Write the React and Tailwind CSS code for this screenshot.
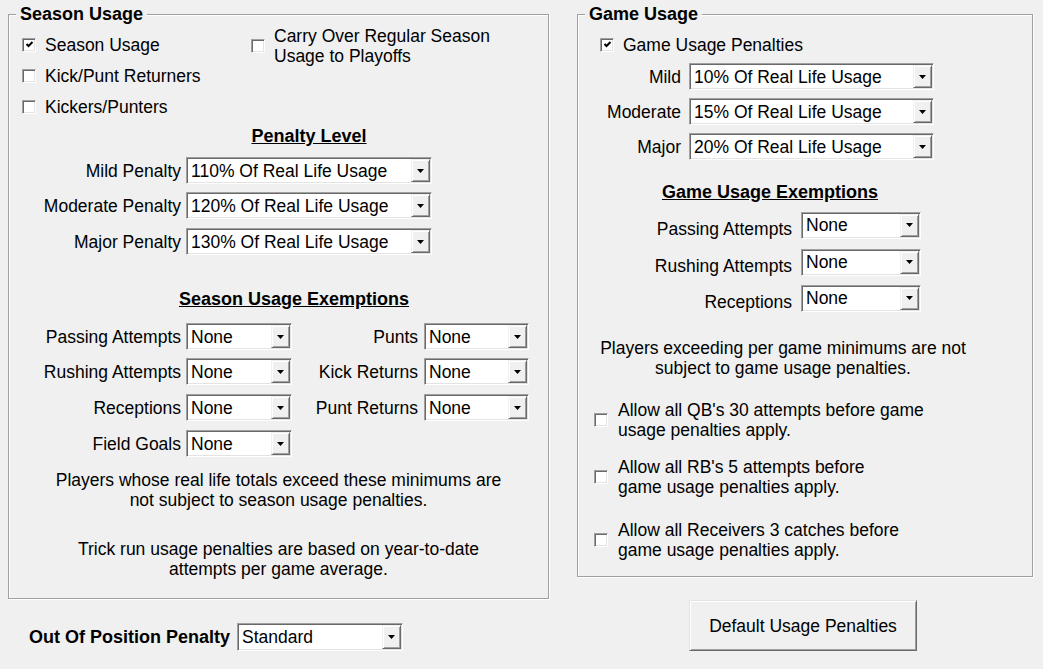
import React from 'react';

// Classic Windows-style checkbox
const Check = ({ checked }) => (
  <span className="w-[14px] h-[14px] shrink-0 bg-white border border-t-[#a0a0a0] border-l-[#a0a0a0] border-r-white border-b-white shadow-[inset_1px_1px_0_#696969,inset_-1px_-1px_0_#e3e3e3] flex items-center justify-center">
    {checked && (
      <svg width="9" height="9" viewBox="0 0 9 9">
        <path d="M1.5 4 L3.5 6 L7.5 2" stroke="#000" strokeWidth="2" fill="none" />
      </svg>
    )}
  </span>
);

const CheckRow = ({ checked, children, className = '' }) => (
  <div className={`flex items-center ${className}`}>
    <Check checked={checked} />
    <span className="ml-[9px] whitespace-nowrap">{children}</span>
  </div>
);

// Combo box with the little dropdown button
const Select = ({ value, className = '', tall }) => (
  <div
    className={`flex shrink-0 bg-white border border-t-[#a0a0a0] border-l-[#a0a0a0] border-r-white border-b-white shadow-[inset_1px_1px_0_#696969,inset_-1px_-1px_0_#e3e3e3] p-[1px] ${tall ? 'h-[28px]' : 'h-[27px]'} ${className}`}
  >
    <span className="flex-1 pl-[3px] flex items-center whitespace-nowrap overflow-hidden">{value}</span>
    <span className="w-[19px] flex items-center justify-center bg-[#f0f0f0] border border-t-[#f0f0f0] border-l-[#f0f0f0] border-r-[#696969] border-b-[#696969] shadow-[inset_1px_1px_0_#fff,inset_-1px_-1px_0_#a0a0a0]">
      <svg width="7" height="4" viewBox="0 0 7 4">
        <path d="M0 0h7L3.5 4z" fill="#000" />
      </svg>
    </span>
  </div>
);

const GroupBox = ({ title, className = '', children }) => (
  <fieldset className={`min-w-0 border border-[#a0a0a0] shadow-[inset_1px_1px_0_#fff,1px_1px_0_#fff] ${className}`}>
    <legend className="ml-[7px] px-[4px] font-bold text-[18px] bg-[#f0f0f0] leading-[20px]">{title}</legend>
    {children}
  </fieldset>
);

const SeasonRow = ({ left, right, className = '' }) => (
  <div className={`flex items-center ${className}`}>
    <span className="w-[172px] text-right whitespace-nowrap">{left}</span>
    <Select className="ml-[5px] w-[106px]" value="None" />
    {right && (
      <>
        <span className="w-[126px] text-right whitespace-nowrap">{right}</span>
        <Select className="ml-[6px] w-[105px]" value="None" />
      </>
    )}
  </div>
);

const GameRow = ({ label, value, className = '' }) => (
  <div className={`flex items-center ${className}`}>
    <span className="w-[103px] text-right whitespace-nowrap">{label}</span>
    <Select className="ml-[8px] w-[245px]" value={value} />
  </div>
);

const GameExemptRow = ({ label, className = '' }) => (
  <div className={`flex items-center ${className}`}>
    <span className="w-[214px] text-right whitespace-nowrap mt-[8px]">{label}</span>
    <Select className="ml-[9px] w-[120px]" value="None" />
  </div>
);

export default function App() {
  return (
    <div className="w-[1043px] h-[669px] overflow-hidden bg-[#f0f0f0] text-black text-[17.5px] leading-[20px] font-['Liberation_Sans',Arial,sans-serif] flex pl-[8px] pt-[4px]">
      {/* Left column */}
      <div className="w-[541px] shrink-0 flex flex-col">
        <GroupBox title="Season Usage" className="h-[595px]">
          <div className="flex">
            <div className="w-[242px] pl-[13px] mt-[5px] flex flex-col">
              <CheckRow checked className="h-[31px]">Season Usage</CheckRow>
              <CheckRow className="h-[31px]">Kick/Punt Returners</CheckRow>
              <CheckRow className="h-[31px]">Kickers/Punters</CheckRow>
            </div>
            <div className="mt-[2px] flex items-center h-[40px]">
              <Check />
              <span className="ml-[9px] whitespace-nowrap">
                Carry Over Regular Season
                <br />
                Usage to Playoffs
              </span>
            </div>
          </div>

          <div className="mt-[4px] ml-[177px] w-[246px] text-center font-bold text-[18px] underline">Penalty Level</div>
          <div className="flex items-center mt-[11px]">
            <span className="w-[172px] text-right whitespace-nowrap">Mild Penalty</span>
            <Select className="ml-[5px] w-[246px]" value="110% Of Real Life Usage" />
          </div>
          <div className="flex items-center mt-[8px]">
            <span className="w-[172px] text-right whitespace-nowrap">Moderate Penalty</span>
            <Select className="ml-[5px] w-[246px]" value="120% Of Real Life Usage" />
          </div>
          <div className="flex items-center mt-[9px]">
            <span className="w-[172px] text-right whitespace-nowrap">Major Penalty</span>
            <Select className="ml-[5px] w-[246px]" value="130% Of Real Life Usage" />
          </div>

          <div className="mt-[34px] ml-[135px] w-[300px] text-center font-bold text-[18px] underline">Season Usage Exemptions</div>
          <SeasonRow className="mt-[14px]" left="Passing Attempts" right="Punts" />
          <SeasonRow className="mt-[8px]" left="Rushing Attempts" right="Kick Returns" />
          <SeasonRow className="mt-[9px]" left="Receptions" right="Punt Returns" />
          <SeasonRow className="mt-[9px]" left="Field Goals" />

          <p className="mt-[13px] text-center">
            Players whose real life totals exceed these minimums are
            <br />
            not subject to season usage penalties.
          </p>
          <p className="mt-[29px] text-center">
            Trick run usage penalties are based on year-to-date
            <br />
            attempts per game average.
          </p>
        </GroupBox>

        <div className="flex items-center mt-[24px]">
          <span className="ml-[21px] w-[201px] text-right font-bold text-[18px] whitespace-nowrap">Out Of Position Penalty</span>
          <Select tall className="ml-[7px] w-[166px]" value="Standard" />
        </div>
      </div>

      {/* Right column */}
      <div className="w-[456px] ml-[28px] shrink-0 flex flex-col">
        <GroupBox title="Game Usage" className="h-[573px]">
          <CheckRow checked className="h-[31px] mt-[5px] pl-[22px]">Game Usage Penalties</CheckRow>
          <GameRow className="mt-[3px]" label="Mild" value="10% Of Real Life Usage" />
          <GameRow className="mt-[8px]" label="Moderate" value="15% Of Real Life Usage" />
          <GameRow className="mt-[8px]" label="Major" value="20% Of Real Life Usage" />

          <div className="mt-[22px] ml-[42px] w-[300px] text-center font-bold text-[18px] underline">Game Usage Exemptions</div>
          <GameExemptRow className="mt-[9px]" label="Passing Attempts" />
          <GameExemptRow className="mt-[9px]" label="Rushing Attempts" />
          <GameExemptRow className="mt-[8px]" label="Receptions" />

          <p className="mt-[26px] w-[410px] text-center">
            Players exceeding per game minimums are not
            <br />
            subject to game usage penalties.
          </p>

          <div className="flex items-center pl-[16px] mt-[22px]">
            <Check />
            <span className="ml-[10px]">
              Allow all QB's 30 attempts before game
              <br />
              usage penalties apply.
            </span>
          </div>
          <div className="flex items-center pl-[16px] mt-[17px]">
            <Check />
            <span className="ml-[10px]">
              Allow all RB's 5 attempts before
              <br />
              game usage penalties apply.
            </span>
          </div>
          <div className="flex items-center pl-[16px] mt-[23px]">
            <Check />
            <span className="ml-[10px]">
              Allow all Receivers 3 catches before
              <br />
              game usage penalties apply.
            </span>
          </div>
        </GroupBox>

        <button className="mt-[23px] ml-[112px] w-[228px] h-[51px] bg-[#f0f0f0] border border-t-[#e3e3e3] border-l-[#e3e3e3] border-r-[#696969] border-b-[#696969] shadow-[inset_1px_1px_0_#fff,inset_-1px_-1px_0_#a0a0a0] text-[17.5px]">
          Default Usage Penalties
        </button>
      </div>
    </div>
  );
}
